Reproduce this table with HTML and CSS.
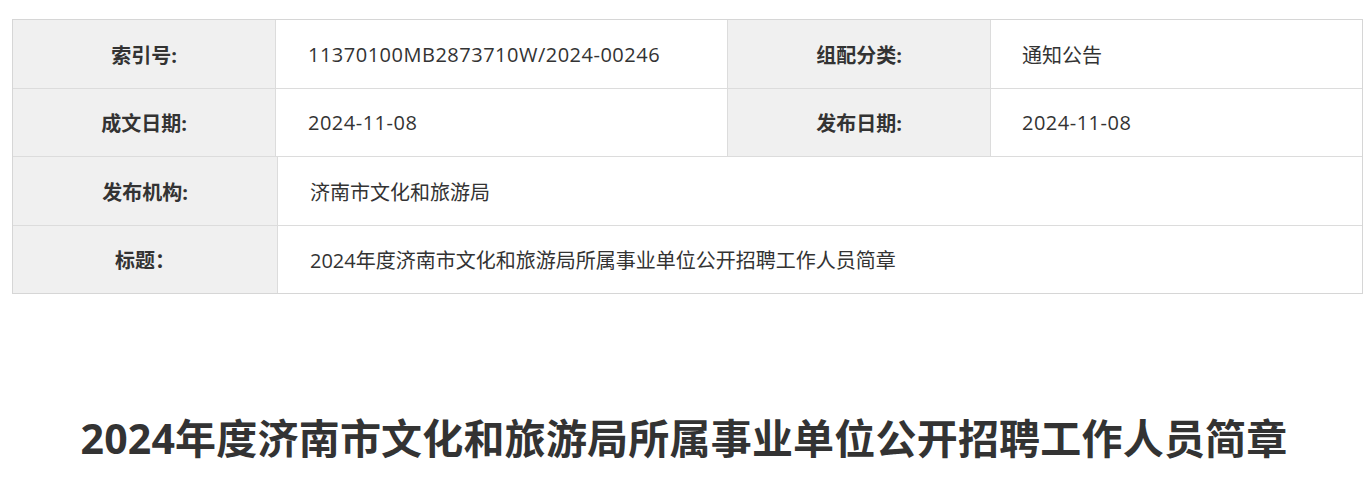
FILE: index.html
```html
<!DOCTYPE html>
<html lang="zh-CN">
<head>
<meta charset="utf-8">
<title>2024年度济南市文化和旅游局所属事业单位公开招聘工作人员简章</title>
<link rel="stylesheet" href="styles.css">
</head>
<body>
<div class="info">
  <div class="row row-a">
    <div class="cell label w1">索引号:</div>
    <div class="cell value w2 latin">11370100MB2873710W/2024-00246</div>
    <div class="cell label w3">组配分类:</div>
    <div class="cell value w4">通知公告</div>
  </div>
  <div class="row row-b">
    <div class="cell label w1">成文日期:</div>
    <div class="cell value w2 latin">2024-11-08</div>
    <div class="cell label w3">发布日期:</div>
    <div class="cell value w4 latin">2024-11-08</div>
  </div>
  <div class="row row-a">
    <div class="cell label wl">发布机构:</div>
    <div class="cell value wr">济南市文化和旅游局</div>
  </div>
  <div class="row row-b">
    <div class="cell label wl">标题：</div>
    <div class="cell value wr">2024年度济南市文化和旅游局所属事业单位公开招聘工作人员简章</div>
  </div>
</div>
<h1 class="title">2024年度济南市文化和旅游局所属事业单位公开招聘工作人员简章</h1>
</body>
</html>
```

FILE: styles.css
```css
html, body {
  margin: 0;
  padding: 0;
  background: #fff;
}
body {
  font-family: "Open Sans", "Noto Sans CJK SC", sans-serif;
  color: #333;
}
.info {
  width: 1349px;
  margin: 19px 0 0 12px;
  border: 1px solid #d6d6d6;
}
.row {
  display: flex;
}
.row + .row {
  border-top: 1px solid #dcdcdc;
}
.row-a { height: 68px; }
.row-b { height: 67px; }
.cell {
  display: flex;
  align-items: center;
  font-size: 20px;
  box-sizing: border-box;
}
.label {
  background: #f0f0f0;
  justify-content: center;
  font-weight: 700;
  color: #333;
}
.value {
  padding-left: 32px;
  color: #333;
}
.w4 {
  padding-left: 31px;
}
.latin {
  letter-spacing: 0.5px;
}
.w1 { width: 263px; border-right: 1px solid #dcdcdc; }
.w2 { width: 451px; }
.w3 { width: 264px; border-left: 1px solid #dcdcdc; border-right: 1px solid #dcdcdc; }
.w4 { flex: 1; }
.wl { width: 265px; border-right: 1px solid #dcdcdc; }
.wr { flex: 1; }
.title {
  margin: 115px 0 0;
  text-align: center;
  font-size: 41px;
  font-weight: 700;
  line-height: 58px;
  letter-spacing: 0.2px;
  color: #333;
}
```
